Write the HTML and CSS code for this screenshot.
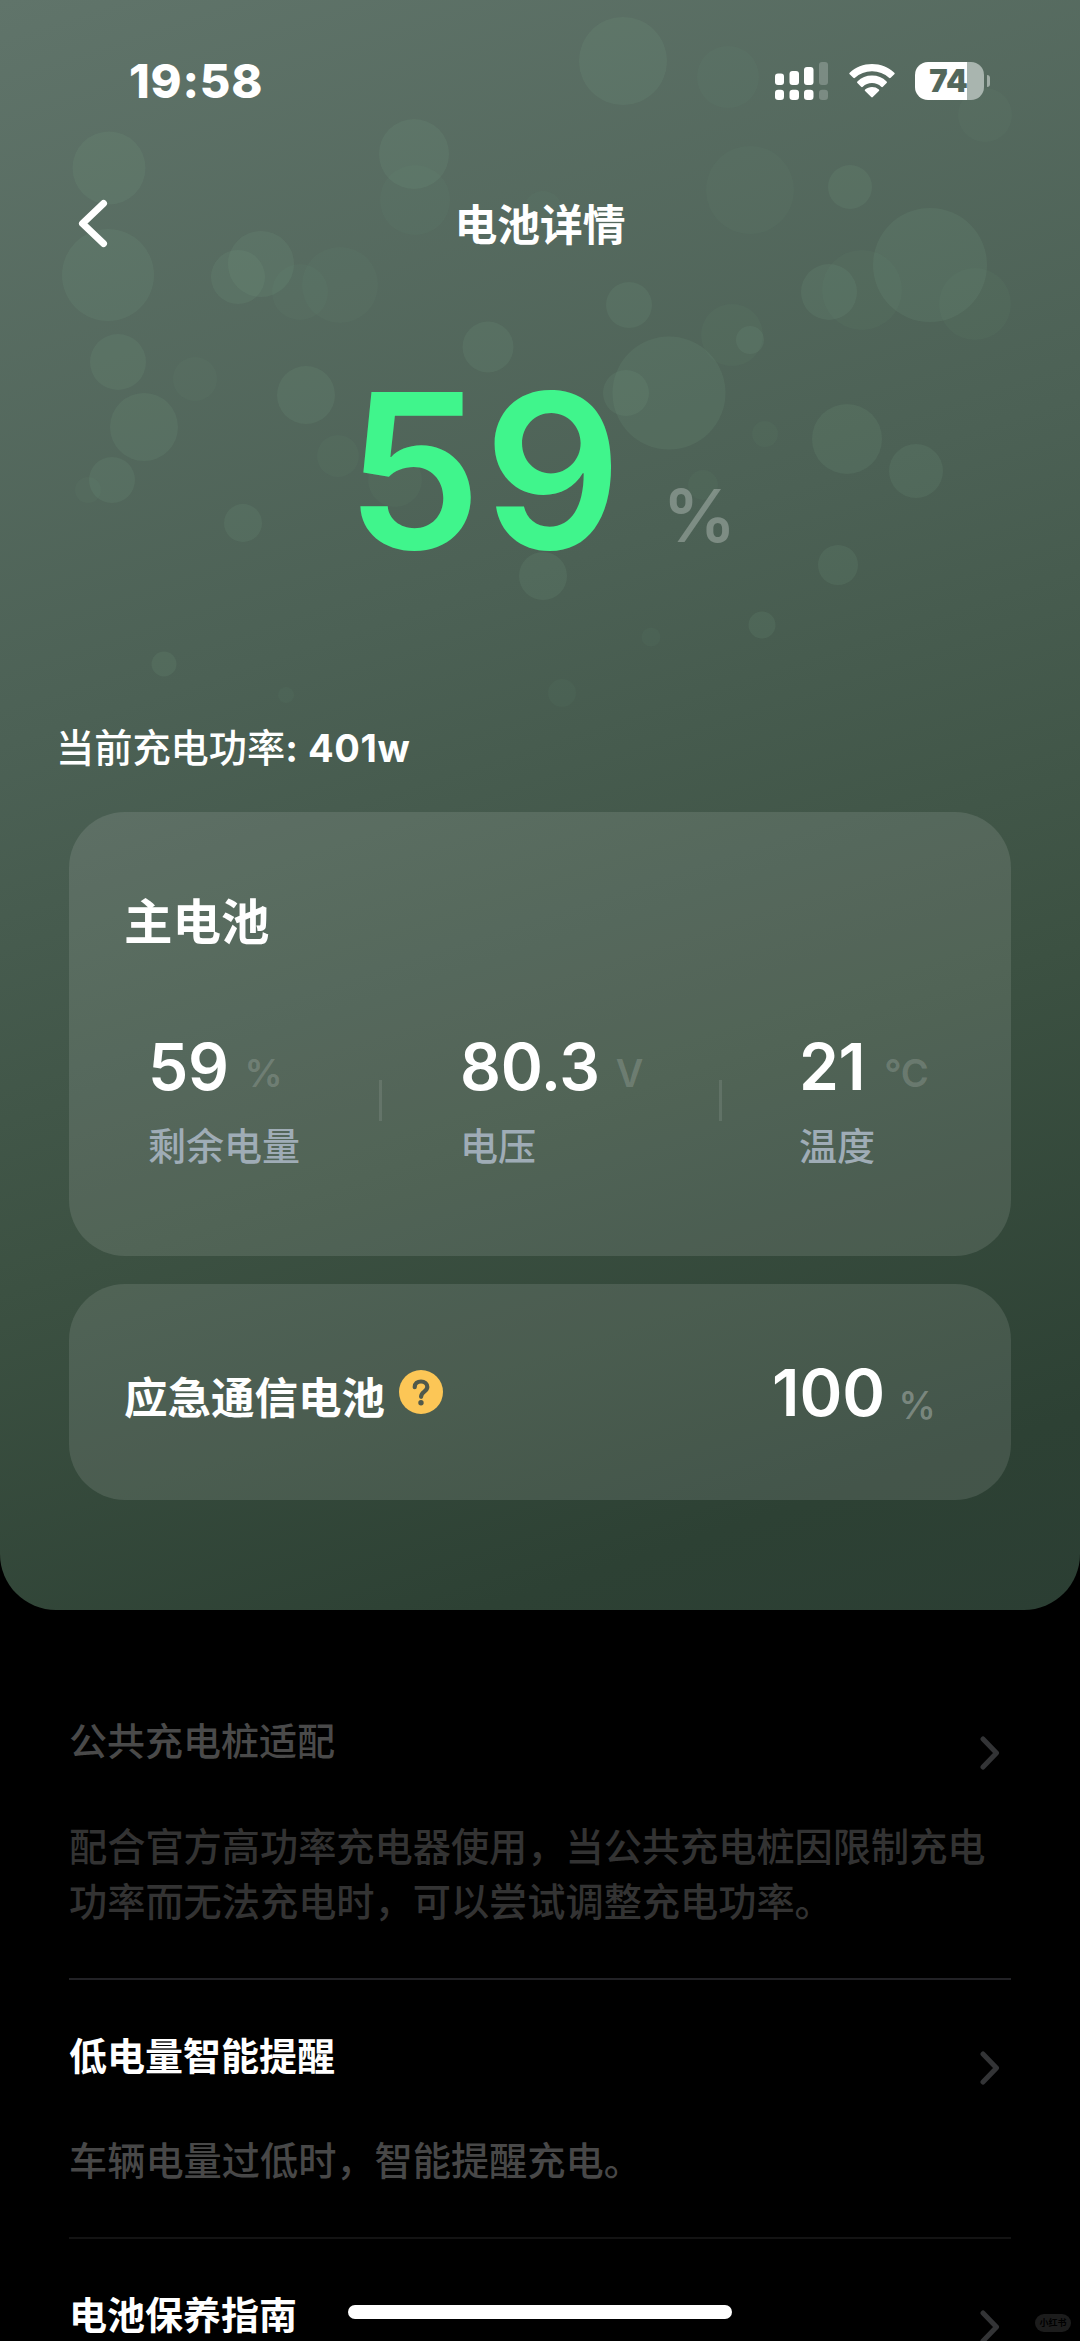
FILE: index.html
```html
<!DOCTYPE html>
<html lang="zh-CN">
<head>
<meta charset="utf-8">
<title>电池详情</title>
<link rel="stylesheet" href="styles.css">
</head>
<body>
<main class="screen">
  <section class="hero">
    <svg class="bubbles" viewBox="0 0 1080 760" aria-hidden="true">
      <g class="bubble">
        <circle cx="623" cy="61" r="44"/><circle cx="109" cy="168" r="36.5"/><circle cx="414" cy="154" r="35"/>
        <circle cx="108" cy="275" r="46"/><circle cx="261" cy="264" r="33"/><circle cx="238" cy="277" r="27"/>
        <circle cx="850" cy="187" r="22"/><circle cx="930" cy="265" r="57"/><circle cx="829" cy="292" r="28"/>
        <circle cx="629" cy="305" r="23"/><circle cx="118" cy="362" r="28"/><circle cx="144" cy="427" r="34"/>
        <circle cx="306" cy="395" r="29"/><circle cx="488" cy="347" r="25.5"/><circle cx="669" cy="393" r="56.5"/>
        <circle cx="626" cy="393" r="23"/><circle cx="750" cy="340" r="14"/><circle cx="847" cy="439" r="35"/>
        <circle cx="916" cy="471" r="27"/><circle cx="112" cy="480" r="23"/><circle cx="243" cy="523" r="19"/>
        <circle cx="543" cy="576" r="24"/><circle cx="838" cy="565" r="20"/><circle cx="762" cy="625" r="13.5"/>
        <circle cx="164" cy="664" r="12.5"/>
      </g>
      <g class="bubble bubble-faint">
        <circle cx="728" cy="77" r="31"/><circle cx="543" cy="210" r="19"/><circle cx="862" cy="290" r="40"/>
        <circle cx="750" cy="190" r="44"/><circle cx="340" cy="285" r="38"/><circle cx="195" cy="379" r="22"/>
        <circle cx="732" cy="335" r="31"/><circle cx="765" cy="434" r="13"/><circle cx="338" cy="456" r="21"/>
        <circle cx="395" cy="480" r="27"/><circle cx="88" cy="490" r="13"/><circle cx="286" cy="695" r="8"/>
        <circle cx="562" cy="693" r="14"/><circle cx="975" cy="304" r="36"/><circle cx="703" cy="485" r="15"/>
        <circle cx="415" cy="200" r="35"/><circle cx="985" cy="115" r="27"/><circle cx="300" cy="292" r="28"/>
        <circle cx="651" cy="637" r="9.5"/>
      </g>
    </svg>

    <header class="status-bar">
      <span class="clock">19:58</span>
      <div class="status-icons">
        <svg width="53" height="40" viewBox="0 0 53 40" fill="#fff">
          <rect x="0" y="12.5" width="9" height="11.5" rx="3"/><rect x="14.5" y="10" width="9.5" height="14" rx="3"/>
          <rect x="29" y="6" width="9.5" height="18" rx="3"/><rect x="44" y="1" width="9" height="23" rx="3" opacity=".22"/>
          <rect x="0" y="28.8" width="9" height="10.2" rx="3.2"/><rect x="14.5" y="28.8" width="9.5" height="10.2" rx="3.2"/>
          <rect x="29" y="28.8" width="9.5" height="10.2" rx="3.2"/><rect x="44" y="28.8" width="9" height="10.2" rx="3.2" opacity=".22"/>
        </svg>
        <svg class="wifi" width="46" height="36" viewBox="0 0 46 36" fill="#fff">
          <path d="M23 1C14.500 1 6.500 4.200.7 9.700a1 1 0 0 0 0 1.500l3.600 3.600a1.200 1.200 0 0 0 1.700 0A25 25 0 0 1 23 8.300a25 25 0 0 1 17 6.500 1.200 1.200 0 0 0 1.700 0l3.600-3.600a1 1 0 0 0 0-1.500C39.500 4.200 31.500 1 23 1z"/>
          <path d="M23 12.600a21 21 0 0 0-14.600 5.800 1.100 1.100 0 0 0 0 1.600l3.700 3.700a1.200 1.200 0 0 0 1.700 0 13.400 13.400 0 0 1 18.400 0 1.200 1.200 0 0 0 1.700 0l3.700-3.700a1.100 1.100 0 0 0 0-1.600A21 21 0 0 0 23 12.600z"/>
          <path d="M23 24c-2.600 0-5 .9-6.900 2.400a1 1 0 0 0 0 1.500l6.100 6.200a1.200 1.200 0 0 0 1.600 0l6.100-6.200a1 1 0 0 0 0-1.500A11 11 0 0 0 23 24z"/>
        </svg>
        <div class="battery"><span class="battery-body">74</span><i class="battery-tip"></i></div>
      </div>
    </header>

    <nav class="nav-bar">
      <svg class="back" width="36" height="54" viewBox="0 0 36 54"><path d="M28.500 8.500 7.500 28.500l21 20"/></svg>
      <h1>电池详情</h1>
    </nav>

    <div class="charge"><span class="charge-value">59</span><span class="charge-unit">%</span></div>

    <p class="power">当前充电功率<b>: 401w</b></p>

    <section class="card main-battery">
      <h2>主电池</h2>
      <div class="stats">
        <div class="stat"><div class="stat-value">59<span class="unit">%</span></div><div class="stat-label">剩余电量</div></div>
        <div class="stat stat-mid"><div class="stat-value">80.3<span class="unit">V</span></div><div class="stat-label">电压</div></div>
        <div class="stat"><div class="stat-value">21<span class="unit degree">°C</span></div><div class="stat-label">温度</div></div>
      </div>
    </section>

    <section class="card backup-battery">
      <h3>应急通信电池</h3>
      <svg width="44" height="44" viewBox="0 0 44 44">
        <circle cx="22" cy="22" r="22" fill="#fcc656"/>
        <path d="M15.700 17.200c0-3.700 2.700-5.700 6.300-5.700s6.300 2.200 6.300 5.600c0 4.600-6.200 4.700-6.200 9.700" fill="none" stroke="#50594b" stroke-width="4.200" stroke-linecap="round"/>
        <circle cx="22" cy="32.700" r="2.700" fill="#50594b"/>
      </svg>
      <div class="backup-value">100<span>%</span></div>
    </section>
  </section>

  <section class="list">
    <article class="item disabled">
      <div class="item-head"><h4>公共充电桩适配</h4><svg class="chevron" width="20" height="34" viewBox="0 0 20 34"><path d="m3 3 13.500 14L3 31"/></svg></div>
      <p>配合官方高功率充电器使用，当公共充电桩因限制充电功率而无法充电时，可以尝试调整充电功率。</p>
    </article>
    <article class="item">
      <div class="item-head"><h4>低电量智能提醒</h4><svg class="chevron" width="20" height="34" viewBox="0 0 20 34"><path d="m3 3 13.500 14L3 31"/></svg></div>
      <p>车辆电量过低时，智能提醒充电。</p>
    </article>
    <article class="item">
      <div class="item-head"><h4>电池保养指南</h4><svg class="chevron" width="20" height="34" viewBox="0 0 20 34"><path d="m3 3 13.500 14L3 31"/></svg></div>
    </article>
  </section>

  <div class="home-indicator"></div>
  <span class="watermark">小红书</span>
</main>
</body>
</html>
```
FILE: styles.css
```css
* { box-sizing: border-box; }
html, body { margin: 0; background: #000; }
body { font-family: "Noto Sans CJK SC", sans-serif; color: #fff; }
h1, h2, h3, h4, p { margin: 0; font-weight: 500; }

.screen { position: relative; width: 1080px; height: 2341px; overflow: hidden; }

.hero {
  position: relative;
  height: 1610px;
  border-radius: 0 0 56px 56px;
  background: linear-gradient(162deg, #60746a 0%, #4c6155 38%, #3c5142 66%, #2d4134 90%, #2b3e33 100%);
}
.hero > * { position: relative; }
.hero > .bubbles { position: absolute; inset: 0 0 auto 0; width: 1080px; height: 760px; }
.bubble { fill: #78a589; fill-opacity: .14; }
.bubble-faint { fill-opacity: .06; }

.status-bar {
  display: flex;
  justify-content: space-between;
  align-items: center;
  height: 162px;
  padding: 0 90px 0 129px;
}
.clock { font: 800 47px/60px Inter, sans-serif; letter-spacing: .8px; }
.status-icons { display: flex; align-items: center; }
.wifi { margin: 0 20px 0 21px; }
.battery { display: flex; align-items: center; gap: 3px; }
.battery-body {
  width: 69px;
  height: 38px;
  padding-right: 2px;
  border-radius: 13px;
  background: linear-gradient(90deg, #fff 52px, #a9b5af 52px);
  color: #53685c;
  font: 900 31px/38px Inter, sans-serif;
  text-align: center;
}
.battery-tip { width: 3px; height: 12px; border-radius: 0 4px 4px 0; background: #a0ada6; }

.nav-bar {
  display: grid;
  grid-template-columns: 36px 1fr 36px;
  align-items: center;
  height: 120px;
  padding: 0 75px;
}
.nav-bar h1 { font-size: 42.800px; line-height: 60px; text-align: center; font-weight: 700; }
.back path { fill: none; stroke: #fff; stroke-width: 7px; stroke-linecap: round; stroke-linejoin: round; }

.charge {
  display: flex;
  justify-content: center;
  align-items: center;
  height: 377px;
  padding-left: 2px;
  font-family: Inter, sans-serif;
}
.charge-value { font-size: 216px; line-height: 260px; font-weight: 600; letter-spacing: 2px; color: #40f58c; }
.charge-unit { margin: 90px 0 0 39px; font-size: 73px; line-height: 90px; font-weight: 600; color: rgba(255, 255, 255, .28); }

.power { height: 153px; padding: 27px 0 0 56px; font-size: 38.200px; line-height: 119px; }
.power b { font-family: Inter, sans-serif; font-weight: 700; font-size: 38px; letter-spacing: .6px; }

.card { margin: 0 69px; border-radius: 56px; background: rgba(255, 255, 255, .11); }

.main-battery { height: 444px; padding: 77px 0 0 79px; }
.main-battery h2 { margin-left: -24px; font-size: 48.500px; line-height: 60px; font-weight: 700; }
.stats { display: flex; margin-top: 79px; }
.stat { flex: none; width: 231px; }
.stat-mid {
  position: relative;
  display: flex;
  flex-direction: column;
  width: 343px;
  margin-right: 77px;
  padding-left: 81px;
}
.stat-mid + .stat { width: 140px; }
.stat-mid::before, .stat-mid::after {
  content: "";
  position: absolute;
  top: 52px;
  width: 3px;
  height: 41px;
  background: rgba(255, 255, 255, .1);
}
.stat-mid::before { left: 0; }
.stat-mid::after { right: 0; }
.stat-value { display: flex; align-items: center; font: 600 64px/78px Inter, sans-serif; letter-spacing: -.3px; white-space: nowrap; }
.unit { margin: 12px 0 0 16px; font-size: 38px; font-weight: 600; line-height: 46px; color: rgba(255, 255, 255, .17); }
.degree { margin-left: 19px; }
.stat-label { margin-top: 15px; font-size: 38px; line-height: 46px; font-weight: 500; color: #9facb6; }

.backup-battery { display: flex; align-items: center; height: 216px; margin-top: 28px; padding: 0 75px 0 55px; }
.backup-battery h3 { margin: 8px 14px 0 0; font-size: 43.500px; line-height: 60px; font-weight: 700; }
.backup-value { display: flex; align-items: center; margin-left: auto; padding-top: 1px; font: 600 65px/78px Inter, sans-serif; }
.backup-value span { margin: 25px 0 0 13px; font-size: 38px; line-height: 46px; font-weight: 500; color: rgba(255, 255, 255, .3); }

.list { padding: 55px 69px 0; font-size: 38.200px; line-height: 55px; }
.item { padding: 46px 0 51px; border-bottom: 2px solid #131313; }
.item.disabled { border-color: #222226; }
.item-head { display: flex; justify-content: space-between; height: 55px; padding-right: 11px; }
.item h4 { font-size: 38px; font-weight: 700; }
.item p { margin-top: 50.500px; color: #484848; font-weight: 500; }
.item.disabled h4 { color: #4a4a4a; font-weight: 500; }
.item.disabled p { color: #333; }
.chevron { margin-top: 25px; flex: none; }
.chevron path { fill: none; stroke: #333436; stroke-width: 5px; stroke-linecap: round; stroke-linejoin: round; }

.home-indicator { position: absolute; left: 348px; top: 2305px; width: 384px; height: 14px; border-radius: 7px; background: #fff; }
.watermark {
  position: absolute;
  left: 1035px;
  top: 2314px;
  width: 36px;
  height: 18px;
  border-radius: 9px;
  background: #1c1c1c;
  color: #000;
  font-size: 9px;
  font-weight: 700;
  line-height: 17px;
  text-align: center;
}
```
